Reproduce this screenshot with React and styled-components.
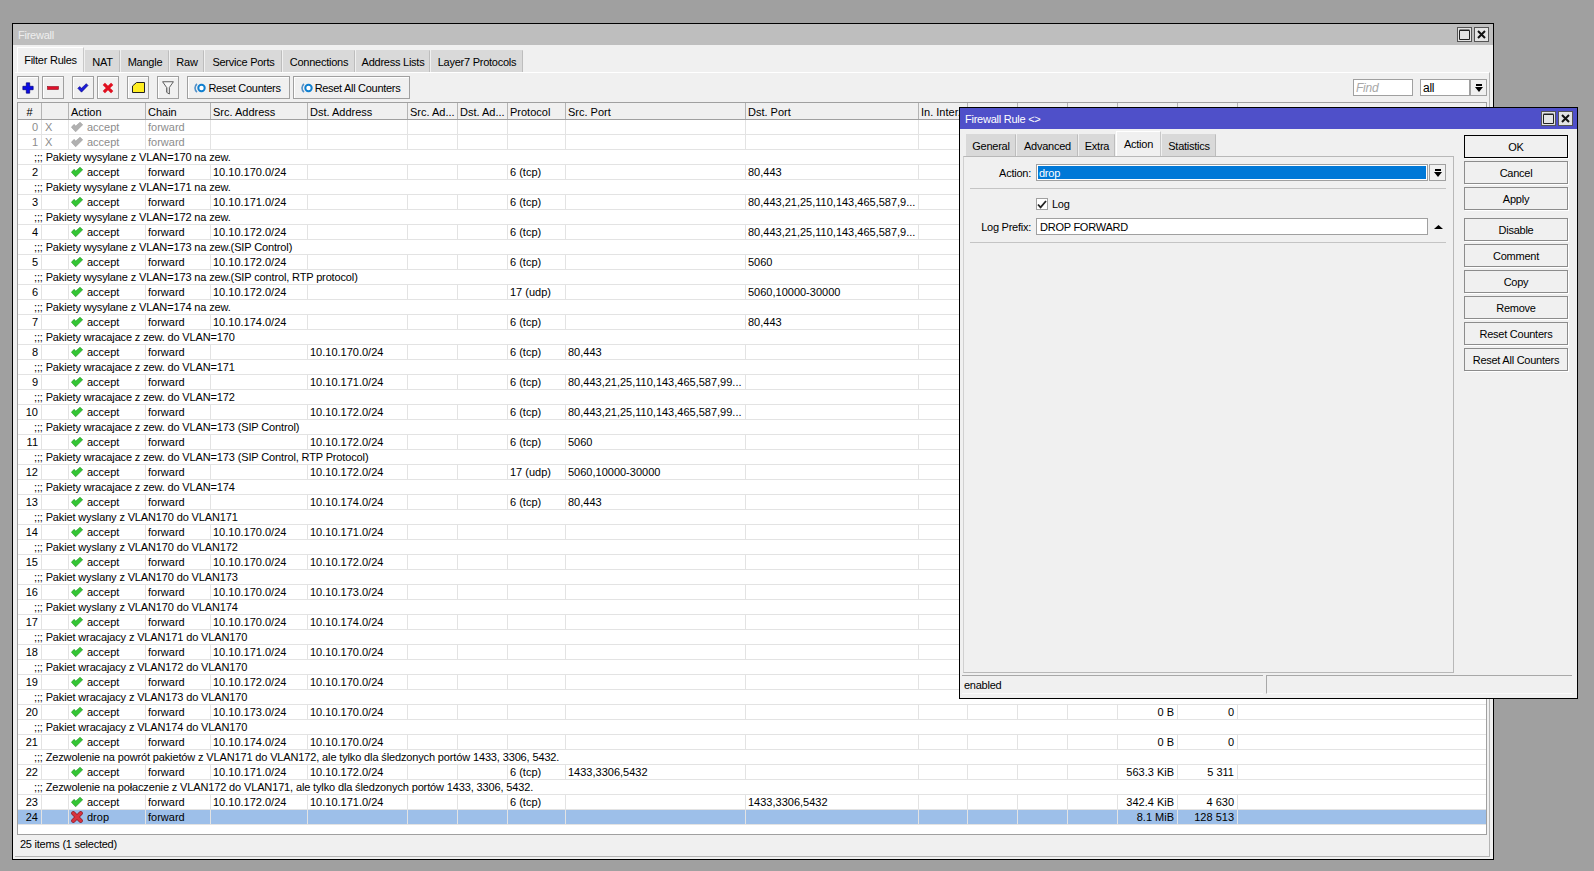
import React from 'react';
import styled, { createGlobalStyle } from 'styled-components';

const GlobalStyle = createGlobalStyle`
  html, body { margin: 0; padding: 0; height: 100%; }
  body { font-family: "Liberation Sans", Arial, sans-serif; font-size: 11px; color: #000; letter-spacing: -0.25px; }
`;

const COLUMNS = '24px 27px 77px 65px 97px 100px 50px 50px 58px 180px 173px 49px 50px 50px 50px 60px 60px';

const Desktop = styled.div`
  position: relative;
  width: 1594px;
  height: 871px;
  background: #a0a0a0;
  overflow: hidden;
`;

const Win = styled.div`
  position: absolute;
  left: ${({ $left }) => $left}px;
  top: ${({ $top }) => $top}px;
  width: ${({ $width }) => $width}px;
  height: ${({ $height }) => $height}px;
  box-sizing: border-box;
  border: 1px solid #000;
  background: #f0f0f0;
  display: flex;
  flex-direction: column;
`;

const TitleBar = styled.div`
  height: 21px;
  flex: none;
  display: flex;
  align-items: center;
  gap: 2px;
  padding: 0 4px 0 5px;
  background: ${({ $active }) => ($active ? '#4f50c9' : '#bebebe')};
  color: ${({ $active }) => ($active ? '#fff' : '#eee')};
`;

const TitleText = styled.span`
  flex: 1;
  font-size: 11px;
  padding-top: 1px;
`;

const WinButton = styled.div`
  width: 15px;
  height: 15px;
  box-sizing: border-box;
  border: 1px solid #555;
  background: #e4e4e4;
  display: flex;
  align-items: center;
  justify-content: center;
`;

const TabStrip = styled.div`
  height: 27px;
  flex: none;
  display: flex;
  align-items: flex-end;
  gap: 1px;
  padding-left: ${({ $inset }) => $inset}px;
`;

const Tab = styled.div`
  width: ${({ $w }) => $w}px;
  height: ${({ $active }) => ($active ? 25 : 22)}px;
  box-sizing: border-box;
  display: flex;
  align-items: center;
  justify-content: center;
  background: ${({ $active }) => ($active ? '#f0f0f0' : '#d9d9d9')};
  border: 1px solid ${({ $active }) => ($active ? '#fff' : '#d9d9d9')};
  border-bottom: 0;
  border-right-color: ${({ $active }) => ($active ? '#c8c8c8' : '#bdbdbd')};
  padding-bottom: ${({ $active }) => ($active ? 1 : 0)}px;
  white-space: nowrap;
`;

const Page = styled.div`
  flex: 1;
  min-height: 0;
  margin: 0 3px 2px 2px;
  padding: 3px 2px 0;
  display: flex;
  flex-direction: column;
  border-top: 1px solid #fff;
  border-right: 1px solid #b4b4b4;
  border-bottom: 1px solid #b4b4b4;
`;

const Toolbar = styled.div`
  height: 23px;
  flex: none;
  display: flex;
  gap: 8px;
  margin-bottom: 3px;
`;

const ToolGroup = styled.div`
  display: flex;
  gap: 3px;
`;

const FindGroup = styled.div`
  margin-left: auto;
  display: flex;
  align-items: center;
`;

const ToolButton = styled.div`
  width: ${({ $w }) => $w || 22}px;
  height: 23px;
  box-sizing: border-box;
  border: 1px solid #a0a0a0;
  box-shadow: inset 1px 1px 0 #fff;
  background: #f0f0f0;
  display: flex;
  align-items: center;
  justify-content: center;
  gap: 2px;
  white-space: nowrap;
`;

const ToolLabel = styled.span`
  letter-spacing: -0.3px;
  padding-right: 2px;
`;

const TextField = styled.div`
  width: ${({ $w }) => $w}px;
  height: 17px;
  margin-right: ${({ $mr }) => $mr || 0}px;
  box-sizing: border-box;
  border: 1px solid #a0a0a0;
  background: #fff;
  padding: 1px 2px 0;
  line-height: 14px;
  font-size: 12px;
  font-style: ${({ $hint }) => ($hint ? 'italic' : 'normal')};
  color: ${({ $hint }) => ($hint ? '#a8a8a8' : '#000')};
`;

const ArrowButton = styled.div`
  width: 17px;
  height: 17px;
  box-sizing: border-box;
  border: 1px solid #a0a0a0;
  background: #f0f0f0;
  display: flex;
  align-items: center;
  justify-content: center;
`;

const Table = styled.div`
  height: 733px;
  flex: none;
  box-sizing: border-box;
  border: 1px solid #a0a0a0;
  background: #fff;
`;

const HeaderRow = styled.div`
  height: 17px;
  box-sizing: border-box;
  border-bottom: 1px solid #a0a0a0;
  background: #f0f0f0;
  display: grid;
  grid-template-columns: ${COLUMNS} 1fr;
`;

const HeaderCell = styled.div`
  box-sizing: border-box;
  border-right: 1px solid #b4b4b4;
  padding: 2px 0 0 ${({ $center }) => ($center ? 0 : 2)}px;
  text-align: ${({ $center }) => ($center ? 'center' : 'left')};
  line-height: 14px;
  letter-spacing: 0;
  overflow: hidden;
  white-space: nowrap;
  &:last-child { border-right: 0; }
`;

const Row = styled.div`
  height: 15px;
  box-sizing: border-box;
  border-bottom: 1px solid #e3e3e3;
  display: grid;
  grid-template-columns: ${COLUMNS} 1fr;
  background: ${({ $selected }) => ($selected ? '#9dbfe9' : '#fff')};
  color: ${({ $muted }) => ($muted ? '#8c8c8c' : '#000')};
`;

const Cell = styled.div`
  box-sizing: border-box;
  border-right: 1px solid #e3e3e3;
  padding: 0 3px 0 ${({ $flag }) => ($flag ? 3 : 2)}px;
  line-height: 14px;
  letter-spacing: 0;
  text-align: ${({ $right }) => ($right ? 'right' : 'left')};
  overflow: hidden;
  white-space: nowrap;
  display: ${({ $icon }) => ($icon ? 'flex' : 'block')};
  align-items: center;
  gap: 4px;
  &:last-child { border-right: 0; }
`;

const CommentRow = styled.div`
  height: 15px;
  box-sizing: border-box;
  border-bottom: 1px solid #e3e3e3;
  padding-left: 16px;
  line-height: 14px;
  letter-spacing: -0.14px;
  white-space: nowrap;
`;

const StatusText = styled.div`
  flex: 1;
  padding: 2px 0 0 3px;
  line-height: 14px;
`;

const DialogBody = styled.div`
  flex: none;
  height: 544px;
  display: flex;
`;

const DialogLeft = styled.div`
  width: 494px;
  flex: none;
  display: flex;
  flex-direction: column;
`;

const FormPage = styled.div`
  flex: 1;
  margin-left: 3px;
  padding: 7px 0 0 0;
  box-sizing: border-box;
  border: 1px solid #b8b8b8;
  border-left-color: #d0d0d0;
  display: flex;
  flex-direction: column;
`;

const FormRow = styled.div`
  display: grid;
  grid-template-columns: 67px 392px 16px;
  column-gap: 5px;
  align-items: center;
  height: 17px;
  margin-top: ${({ $mt }) => $mt || 0}px;
`;

const FormLabel = styled.div`
  text-align: right;
  white-space: nowrap;
`;

const FormField = styled.div`
  height: 17px;
  box-sizing: border-box;
  border: 1px solid #a0a0a0;
  background: #fff;
  padding: ${({ $selected }) => ($selected ? '1px' : '1px 3px 0')};
  line-height: 14px;
`;

const Selection = styled.div`
  height: 13px;
  line-height: 14px;
  padding-left: 1px;
  background: #0078d7;
  color: #fff;
`;

const RowEnd = styled.div`
  margin-left: -4px;
  padding-left: ${({ $inset }) => $inset || 0}px;
  display: flex;
  align-items: center;
`;

const Separator = styled.div`
  height: 1px;
  margin: ${({ $mt }) => $mt}px 6px 0 6px;
  width: 476px;
  background: #c4c4c4;
`;

const CheckLine = styled.div`
  display: flex;
  align-items: center;
  gap: 4px;
  height: 12px;
  margin: 9px 0 0 72px;
`;

const CheckBox = styled.div`
  width: 12px;
  height: 12px;
  box-sizing: border-box;
  border: 1px solid #a0a0a0;
  background: #fff;
  display: flex;
  align-items: center;
  justify-content: center;
`;

const DialogActions = styled.div`
  width: 104px;
  margin-left: 10px;
  padding-top: 6px;
  display: flex;
  flex-direction: column;
  gap: 8px;
`;

const ActionGroup = styled.div`
  display: flex;
  flex-direction: column;
  gap: 3px;
`;

const ActionButton = styled.div`
  height: 23px;
  box-sizing: border-box;
  border: 1px solid ${({ $primary }) => ($primary ? '#000' : '#8c8c8c')};
  box-shadow: 1px 1px 0 #fff;
  background: #f0f0f0;
  display: flex;
  align-items: center;
  justify-content: center;
  white-space: nowrap;
`;

const DialogStatus = styled.div`
  display: flex;
  gap: 3px;
  margin: 2px 0 0 2px;
`;

const StatusPane = styled.div`
  width: ${({ $w }) => $w}px;
  height: 19px;
  box-sizing: border-box;
  border-top: 1px solid #a8a8a8;
  border-left: ${({ $divider }) => ($divider ? '1px solid #a8a8a8' : '0')};
  border-bottom: 1px solid #fafafa;
  padding-left: 2px;
  line-height: 18px;
`;

const CheckIcon = ({ color = '#34c534', edge = '#1d8f1d' }) => (
  <svg width="12" height="10" viewBox="0 0 13 11" style={{ flex: 'none' }}>
    <path d="M.3 5.8 3.2 2.6 5.2 4.4 9.8.2 12.8 3 5 10.8Z" fill={color} stroke={edge} strokeWidth=".6" />
  </svg>
);

const DropIcon = () => (
  <svg width="12" height="12" viewBox="0 0 13 13" style={{ flex: 'none' }}>
    <path d="M2.5 2.5 10.5 10.5M10.5 2.5 2.5 10.5" stroke="#8d1f2c" strokeWidth="4.6" strokeLinecap="round" />
    <path d="M2.5 2.5 10.5 10.5M10.5 2.5 2.5 10.5" stroke="#d8323f" strokeWidth="3.2" strokeLinecap="round" />
  </svg>
);

const PlusIcon = () => (
  <svg width="12" height="12" viewBox="0 0 14 14">
    <path d="M5 1h4v4h4v4H9v4H5V9H1V5h4Z" fill="#0a0ae6" stroke="#00007a" strokeWidth=".8" />
  </svg>
);

const MinusIcon = () => (
  <svg width="12" height="4" viewBox="0 0 12 4">
    <rect x=".5" y=".5" width="11" height="3" fill="#e0102a" stroke="#8a1020" strokeWidth=".6" />
  </svg>
);

const BlueCheckIcon = () => (
  <svg width="12" height="10" viewBox="0 0 14 12">
    <path d="M.8 6.4 3 4.2 5.2 6.2 11 .8 13 3 5.2 11Z" fill="#1b1bd8" stroke="#00007a" strokeWidth=".7" />
  </svg>
);

const RedXIcon = () => (
  <svg width="12" height="12" viewBox="0 0 13 13">
    <path d="M2 2 11 11M11 2 2 11" stroke="#e01020" strokeWidth="3.4" />
  </svg>
);

const NoteIcon = () => (
  <svg width="13" height="11" viewBox="0 0 13 11">
    <path d="M.5 4 4.5.5H12.5V10.5H.5Z" fill="#ffee22" stroke="#222" strokeWidth="1" />
  </svg>
);

const FunnelIcon = () => (
  <svg width="12" height="14" viewBox="0 0 14 16">
    <path d="M.7.7H13.3L8.6 7.4V15L5.4 13V7.4Z" fill="#f6f6f6" stroke="#444" strokeWidth="1" />
    <path d="M6.5 7.5V13" stroke="#b0b0b0" strokeWidth="1" />
  </svg>
);

const ResetIcon = () => (
  <svg width="12" height="10" viewBox="0 0 12 10">
    <path d="M3 1A5 5 0 0 0 3 9" fill="none" stroke="#4f8fc8" strokeWidth="1.6" />
    <circle cx="7.5" cy="5" r="3.2" fill="#fff" stroke="#0f7fd0" strokeWidth="2" />
  </svg>
);

const DownBarIcon = () => (
  <svg width="8" height="8" viewBox="0 0 8 8">
    <path d="M1 0H7V2H1ZM0 3H8L4 8Z" fill="#000" />
  </svg>
);

const UpIcon = () => (
  <svg width="9" height="4" viewBox="0 0 9 4">
    <path d="M0 4H9L4.5 0Z" fill="#000" />
  </svg>
);

const MaxIcon = () => (
  <svg width="11" height="11" viewBox="0 0 11 11">
    <path d="M.5 1.5H10.5V10.5H.5ZM.5 1H10.5" fill="none" stroke="#222" strokeWidth="1" />
  </svg>
);

const CloseIcon = () => (
  <svg width="9" height="9" viewBox="0 0 9 9">
    <path d="M1 1 8 8M8 1 1 8" stroke="#111" strokeWidth="2" />
  </svg>
);

const TickIcon = () => (
  <svg width="10" height="9" viewBox="0 0 10 9">
    <path d="M1 4.5 3.6 7.4 9 1" fill="none" stroke="#222" strokeWidth="1.8" />
  </svg>
);

const MAIN_TABS = [
  ['Filter Rules', 67, true], ['NAT', 35], ['Mangle', 48], ['Raw', 34], ['Service Ports', 77],
  ['Connections', 72], ['Address Lists', 74], ['Layer7 Protocols', 92],
];

const RULE_TABS = [
  ['General', 50], ['Advanced', 61], ['Extra', 36], ['Action', 45, true], ['Statistics', 54],
];

const HEADERS = ['#', '', 'Action', 'Chain', 'Src. Address', 'Dst. Address', 'Src. Ad...', 'Dst. Ad...', 'Protocol',
  'Src. Port', 'Dst. Port', 'In. Inter...', '', '', '', '', '', ''];

const LONG_DST = '80,443,21,25,110,143,465,587,9...';
const LONG_SRC = '80,443,21,25,110,143,465,587,99...';
const NET = (n) => `10.10.${n}.0/24`;

const RULES = [
  { id: 0, off: true },
  { id: 1, off: true },
  { id: 2, note: 'Pakiety wysylane z VLAN=170 na zew.', src: NET(170), proto: '6 (tcp)', dport: '80,443' },
  { id: 3, note: 'Pakiety wysylane z VLAN=171 na zew.', src: NET(171), proto: '6 (tcp)', dport: LONG_DST },
  { id: 4, note: 'Pakiety wysylane z VLAN=172 na zew.', src: NET(172), proto: '6 (tcp)', dport: LONG_DST },
  { id: 5, note: 'Pakiety wysylane z VLAN=173 na zew.(SIP Control)', src: NET(172), proto: '6 (tcp)', dport: '5060' },
  { id: 6, note: 'Pakiety wysylane z VLAN=173 na zew.(SIP control, RTP protocol)', src: NET(172), proto: '17 (udp)', dport: '5060,10000-30000' },
  { id: 7, note: 'Pakiety wysylane z VLAN=174 na zew.', src: NET(174), proto: '6 (tcp)', dport: '80,443' },
  { id: 8, note: 'Pakiety wracajace z zew. do VLAN=170', dst: NET(170), proto: '6 (tcp)', sport: '80,443' },
  { id: 9, note: 'Pakiety wracajace z zew. do VLAN=171', dst: NET(171), proto: '6 (tcp)', sport: LONG_SRC },
  { id: 10, note: 'Pakiety wracajace z zew. do VLAN=172', dst: NET(172), proto: '6 (tcp)', sport: LONG_SRC },
  { id: 11, note: 'Pakiety wracajace z zew. do VLAN=173 (SIP Control)', dst: NET(172), proto: '6 (tcp)', sport: '5060' },
  { id: 12, note: 'Pakiety wracajace z zew. do VLAN=173 (SIP Control, RTP Protocol)', dst: NET(172), proto: '17 (udp)', sport: '5060,10000-30000' },
  { id: 13, note: 'Pakiety wracajace z zew. do VLAN=174', dst: NET(174), proto: '6 (tcp)', sport: '80,443' },
  { id: 14, note: 'Pakiet wyslany z VLAN170 do VLAN171', src: NET(170), dst: NET(171) },
  { id: 15, note: 'Pakiet wyslany z VLAN170 do VLAN172', src: NET(170), dst: NET(172) },
  { id: 16, note: 'Pakiet wyslany z VLAN170 do VLAN173', src: NET(170), dst: NET(173) },
  { id: 17, note: 'Pakiet wyslany z VLAN170 do VLAN174', src: NET(170), dst: NET(174) },
  { id: 18, note: 'Pakiet wracajacy z VLAN171 do VLAN170', src: NET(171), dst: NET(170) },
  { id: 19, note: 'Pakiet wracajacy z VLAN172 do VLAN170', src: NET(172), dst: NET(170) },
  { id: 20, note: 'Pakiet wracajacy z VLAN173 do VLAN170', src: NET(173), dst: NET(170), bytes: '0 B', packets: '0' },
  { id: 21, note: 'Pakiet wracajacy z VLAN174 do VLAN170', src: NET(174), dst: NET(170), bytes: '0 B', packets: '0' },
  { id: 22, note: 'Zezwolenie na powrót pakietów z VLAN171 do VLAN172, ale tylko dla śledzonych portów 1433, 3306, 5432.', src: NET(171), dst: NET(172), proto: '6 (tcp)', sport: '1433,3306,5432', bytes: '563.3 KiB', packets: '5 311' },
  { id: 23, note: 'Zezwolenie na połaczenie z VLAN172 do VLAN171, ale tylko dla śledzonych portów 1433, 3306, 5432.', src: NET(172), dst: NET(171), proto: '6 (tcp)', dport: '1433,3306,5432', bytes: '342.4 KiB', packets: '4 630' },
  { id: 24, drop: true, selected: true, bytes: '8.1 MiB', packets: '128 513' },
];

const RuleRow = ({ rule }) => (
  <>
    {rule.note && <CommentRow>;;; {rule.note}</CommentRow>}
    <Row $muted={rule.off} $selected={rule.selected}>
      <Cell $right>{rule.id}</Cell>
      <Cell $flag>{rule.off ? 'X' : ''}</Cell>
      <Cell $icon>
        {rule.drop ? <DropIcon /> : rule.off ? <CheckIcon color="#b0b0b0" edge="#9a9a9a" /> : <CheckIcon />}
        {rule.drop ? 'drop' : 'accept'}
      </Cell>
      <Cell>forward</Cell>
      <Cell>{rule.src}</Cell>
      <Cell>{rule.dst}</Cell>
      <Cell />
      <Cell />
      <Cell>{rule.proto}</Cell>
      <Cell>{rule.sport}</Cell>
      <Cell>{rule.dport}</Cell>
      <Cell />
      <Cell />
      <Cell />
      <Cell />
      <Cell $right>{rule.bytes}</Cell>
      <Cell $right>{rule.packets}</Cell>
      <Cell />
    </Row>
  </>
);

const WindowControls = () => (
  <>
    <WinButton><MaxIcon /></WinButton>
    <WinButton><CloseIcon /></WinButton>
  </>
);

export default function App() {
  return (
    <Desktop>
      <GlobalStyle />
      <Win $left={12} $top={23} $width={1482} $height={837}>
        <TitleBar>
          <TitleText>Firewall</TitleText>
          <WindowControls />
        </TitleBar>
        <TabStrip $inset={4}>
          {MAIN_TABS.map(([label, w, active]) => <Tab key={label} $w={w} $active={active}>{label}</Tab>)}
        </TabStrip>
        <Page>
          <Toolbar>
            <ToolGroup>
              <ToolButton><PlusIcon /></ToolButton>
              <ToolButton><MinusIcon /></ToolButton>
            </ToolGroup>
            <ToolGroup>
              <ToolButton><BlueCheckIcon /></ToolButton>
              <ToolButton><RedXIcon /></ToolButton>
            </ToolGroup>
            <ToolButton><NoteIcon /></ToolButton>
            <ToolButton><FunnelIcon /></ToolButton>
            <ToolGroup>
              <ToolButton $w={103}><ResetIcon /><ToolLabel>Reset Counters</ToolLabel></ToolButton>
              <ToolButton $w={117}><ResetIcon /><ToolLabel>Reset All Counters</ToolLabel></ToolButton>
            </ToolGroup>
            <FindGroup>
              <TextField $w={60} $mr={7} $hint>Find</TextField>
              <TextField $w={50}>all</TextField>
              <ArrowButton><DownBarIcon /></ArrowButton>
            </FindGroup>
          </Toolbar>
          <Table>
            <HeaderRow>
              {HEADERS.map((h, i) => <HeaderCell key={i} $center={i === 0}>{h}</HeaderCell>)}
            </HeaderRow>
            {RULES.map((rule) => <RuleRow key={rule.id} rule={rule} />)}
          </Table>
          <StatusText>25 items (1 selected)</StatusText>
        </Page>
      </Win>

      <Win $left={959} $top={107} $width={619} $height={592}>
        <TitleBar $active>
          <TitleText>Firewall Rule &lt;&gt;</TitleText>
          <WindowControls />
        </TitleBar>
        <DialogBody>
          <DialogLeft>
            <TabStrip $inset={6}>
              {RULE_TABS.map(([label, w, active]) => <Tab key={label} $w={w} $active={active}>{label}</Tab>)}
            </TabStrip>
            <FormPage>
              <FormRow>
                <FormLabel>Action:</FormLabel>
                <FormField $selected><Selection>drop</Selection></FormField>
                <RowEnd><ArrowButton><DownBarIcon /></ArrowButton></RowEnd>
              </FormRow>
              <Separator $mt={7} />
              <CheckLine>
                <CheckBox><TickIcon /></CheckBox>
                Log
              </CheckLine>
              <FormRow $mt={8}>
                <FormLabel>Log Prefix:</FormLabel>
                <FormField>DROP FORWARD</FormField>
                <RowEnd $inset={5}><UpIcon /></RowEnd>
              </FormRow>
              <Separator $mt={7} />
            </FormPage>
          </DialogLeft>
          <DialogActions>
            <ActionGroup>
              <ActionButton $primary>OK</ActionButton>
              <ActionButton>Cancel</ActionButton>
              <ActionButton>Apply</ActionButton>
            </ActionGroup>
            <ActionGroup>
              <ActionButton>Disable</ActionButton>
              <ActionButton>Comment</ActionButton>
              <ActionButton>Copy</ActionButton>
              <ActionButton>Remove</ActionButton>
              <ActionButton>Reset Counters</ActionButton>
              <ActionButton>Reset All Counters</ActionButton>
            </ActionGroup>
          </DialogActions>
        </DialogBody>
        <DialogStatus>
          <StatusPane $w={301}>enabled</StatusPane>
          <StatusPane $w={306} $divider />
        </DialogStatus>
      </Win>
    </Desktop>
  );
}
